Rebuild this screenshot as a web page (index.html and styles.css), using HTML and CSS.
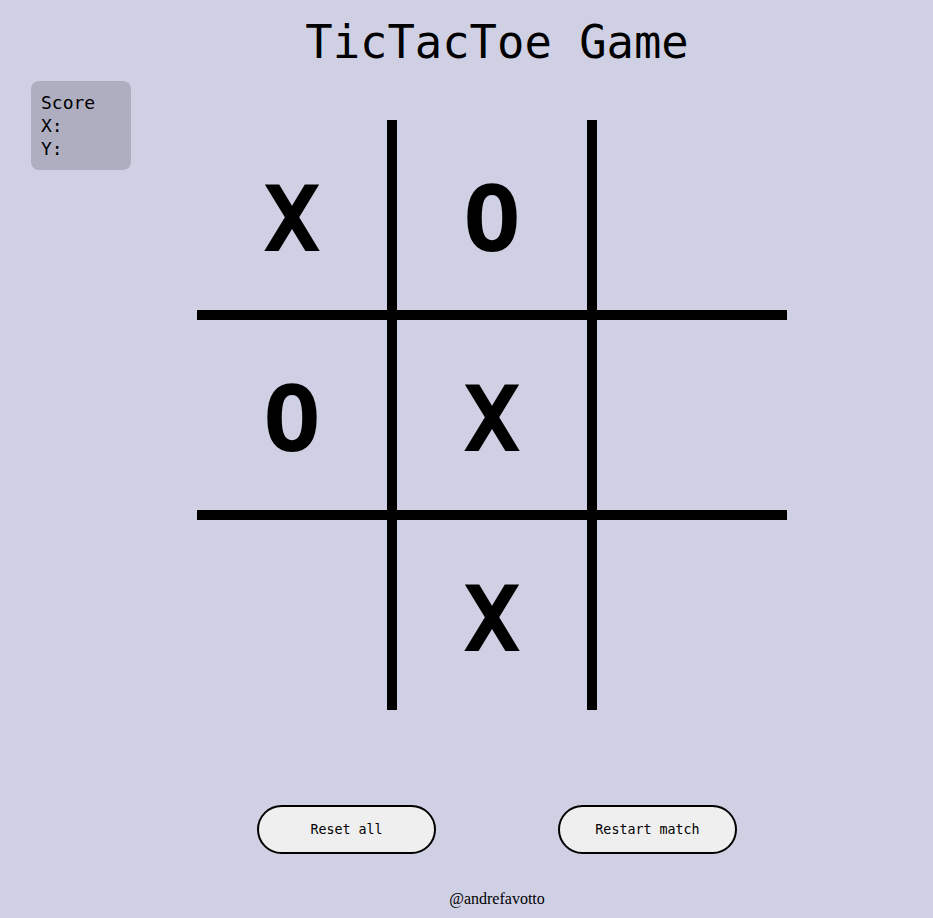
FILE: index.html
```html
<!DOCTYPE html>
<html lang="en">
<head>
<meta charset="utf-8">
<title>TicTacToe Game</title>
<link rel="stylesheet" href="styles.css">
</head>
<body>
<div class="page">
  <aside class="score">
    <div class="score-line">Score</div>
    <div class="score-line">X:</div>
    <div class="score-line">Y:</div>
  </aside>
  <main class="main">
    <h1 class="title">TicTacToe Game</h1>
    <div class="board">
      <div class="cell br bb"><span class="mark">X</span></div>
      <div class="cell br bb"><span class="mark">O</span></div>
      <div class="cell bb"></div>
      <div class="cell br bb"><span class="mark">O</span></div>
      <div class="cell br bb"><span class="mark">X</span></div>
      <div class="cell bb"></div>
      <div class="cell br"></div>
      <div class="cell br"><span class="mark">X</span></div>
      <div class="cell"></div>
    </div>
    <div class="actions">
      <button class="btn">Reset all</button>
      <button class="btn">Restart match</button>
    </div>
    <footer class="footer">@andrefavotto</footer>
  </main>
</div>
</body>
</html>
```

FILE: styles.css
```css
html, body {
  margin: 0;
  padding: 0;
}
body {
  background: #d0d0e5;
  width: 933px;
  height: 918px;
  overflow: hidden;
}
.page {
  display: flex;
  align-items: flex-start;
}
.score {
  margin: 81px 0 0 31px;
  width: 100px;
  box-sizing: border-box;
  padding: 10px;
  background: #aeaec0;
  border-radius: 8px;
  font-family: "DejaVu Sans Mono", monospace;
  font-size: 18px;
  color: #000;
}
.score-line {
  line-height: 23px;
}
.main {
  flex: 1;
  margin-right: 70px;
  display: flex;
  flex-direction: column;
  align-items: center;
}
.title {
  margin: 17px 0 0;
  font-family: "DejaVu Sans Mono", monospace;
  font-weight: normal;
  font-size: 45.5px;
  line-height: 52px;
  color: #000;
}
.board {
  margin-top: 51px;
  width: 600px;
  display: grid;
  grid-template-columns: 200px 200px 190px;
  grid-template-rows: 200px 200px 190px;
}
.cell {
  box-sizing: border-box;
  display: flex;
  align-items: center;
  justify-content: center;
  padding-top: 8px;
  font-family: "DejaVu Sans Mono", monospace;
  font-weight: bold;
  font-size: 90px;
  color: #000;
}
.mark {
  display: inline-block;
  transform: scaleX(1.07);
}
.br { border-right: 10px solid #000; }
.bb { border-bottom: 10px solid #000; }
.actions {
  margin-top: 95px;
  display: flex;
  gap: 122px;
}
.btn {
  width: 179px;
  height: 49px;
  box-sizing: border-box;
  border: 2px solid #000;
  border-radius: 25px;
  background: #efefef;
  font-family: "DejaVu Sans Mono", monospace;
  font-size: 13.333px;
  color: #000;
  padding: 0;
}
.footer {
  margin-top: 36px;
  font-family: "Liberation Serif", serif;
  font-size: 16px;
  line-height: 18px;
  color: #000;
}
```
